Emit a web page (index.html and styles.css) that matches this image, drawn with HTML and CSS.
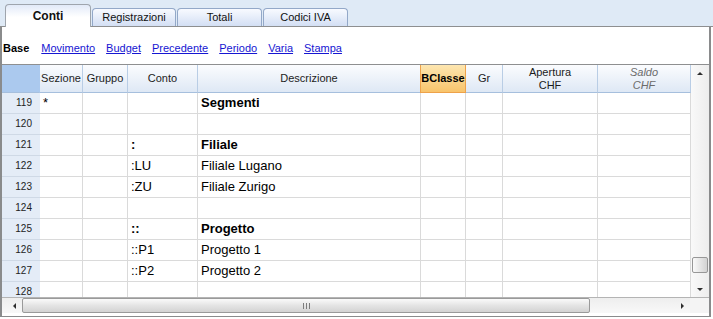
FILE: index.html
```html
<!DOCTYPE html>
<html lang="it">
<head>
<meta charset="utf-8">
<title>Conti</title>
<link rel="stylesheet" href="styles.css">
</head>
<body>
<div class="window">
  <div class="tabbar">
    <div class="tab active">Conti</div>
    <div class="tab">Registrazioni</div>
    <div class="tab">Totali</div>
    <div class="tab">Codici IVA</div>
  </div>
  <div class="panel">
    <nav class="views">
      <b class="current">Base</b>
      <a href="#">Movimento</a>
      <a href="#">Budget</a>
      <a href="#">Precedente</a>
      <a href="#">Periodo</a>
      <a href="#">Varia</a>
      <a href="#">Stampa</a>
    </nav>
    <div class="grid">
      <div class="grid-main">
        <div class="sheet">
          <div class="h corner"></div>
          <div class="h">Sezione</div>
          <div class="h">Gruppo</div>
          <div class="h">Conto</div>
          <div class="h">Descrizione</div>
          <div class="h bc">BClasse</div>
          <div class="h">Gr</div>
          <div class="h">Apertura<br>CHF</div>
          <div class="h saldo">Saldo<br>CHF</div>

          <div class="n">119</div><div class="c">*</div><div class="c"></div><div class="c"></div><div class="c b">Segmenti</div><div class="c"></div><div class="c"></div><div class="c"></div><div class="c"></div>
          <div class="n">120</div><div class="c"></div><div class="c"></div><div class="c"></div><div class="c"></div><div class="c"></div><div class="c"></div><div class="c"></div><div class="c"></div>
          <div class="n">121</div><div class="c"></div><div class="c"></div><div class="c b">:</div><div class="c b">Filiale</div><div class="c"></div><div class="c"></div><div class="c"></div><div class="c"></div>
          <div class="n">122</div><div class="c"></div><div class="c"></div><div class="c">:LU</div><div class="c">Filiale Lugano</div><div class="c"></div><div class="c"></div><div class="c"></div><div class="c"></div>
          <div class="n">123</div><div class="c"></div><div class="c"></div><div class="c">:ZU</div><div class="c">Filiale Zurigo</div><div class="c"></div><div class="c"></div><div class="c"></div><div class="c"></div>
          <div class="n">124</div><div class="c"></div><div class="c"></div><div class="c"></div><div class="c"></div><div class="c"></div><div class="c"></div><div class="c"></div><div class="c"></div>
          <div class="n">125</div><div class="c"></div><div class="c"></div><div class="c b">::</div><div class="c b">Progetto</div><div class="c"></div><div class="c"></div><div class="c"></div><div class="c"></div>
          <div class="n">126</div><div class="c"></div><div class="c"></div><div class="c">::P1</div><div class="c">Progetto 1</div><div class="c"></div><div class="c"></div><div class="c"></div><div class="c"></div>
          <div class="n">127</div><div class="c"></div><div class="c"></div><div class="c">::P2</div><div class="c">Progetto 2</div><div class="c"></div><div class="c"></div><div class="c"></div><div class="c"></div>
          <div class="n">128</div><div class="c"></div><div class="c"></div><div class="c"></div><div class="c"></div><div class="c"></div><div class="c"></div><div class="c"></div><div class="c"></div>
        </div>
        <div class="vscroll">
          <div class="varrow"><span class="tri-up"></span></div>
          <div class="vspace"></div>
          <div class="vthumb"></div>
          <div class="vgap"></div>
          <div class="varrow"><span class="tri-down"></span></div>
        </div>
      </div>
      <div class="hscroll-row">
        <div class="hscroll">
          <div class="harrow left"><span class="tri-left"></span></div>
          <div class="hthumb"><span class="grip"><i></i><i></i><i></i></span></div>
          <div class="hspace"></div>
          <div class="harrow right"><span class="tri-right"></span></div>
        </div>
        <div class="corner-box"></div>
      </div>
    </div>
  </div>
</div>
</body>
</html>
```
FILE: styles.css
```css
* { box-sizing: border-box; }
html, body { margin: 0; padding: 0; }
body {
  width: 713px;
  height: 319px;
  background: #ffffff;
  font-family: "Liberation Sans", Arial, sans-serif;
  color: #000;
  overflow: hidden;
}
.window { width: 713px; }

/* tabs */
.tabbar {
  height: 27px;
  background: #dfeaf6;
  border-bottom: 1px solid #8e8f90;
  display: flex;
  align-items: flex-end;
  gap: 1px;
  padding-left: 5px;
}
.tab {
  height: 18px;
  width: 85px;
  border: 1px solid #93a8c8;
  border-bottom: none;
  border-radius: 4px 4px 0 0;
  background: linear-gradient(#f8faff, #d3dff4);
  font-size: 11px;
  line-height: 17px;
  text-align: center;
  color: #111;
}
.tab:nth-child(2) { width: 84px; }
.tab.active {
  width: 86px;
  height: 23px;
  margin-bottom: -1px;
  border-color: #9fa5ad;
  background: linear-gradient(#e2eaf8, #ffffff 55%);
  font-size: 12px;
  font-weight: bold;
  line-height: 18px;
  padding-top: 2px;
}

/* panel */
.panel {
  width: 711px;
  border-left: 2px solid #8a8b8c;
  border-right: 2px solid #8a8b8c;
  border-bottom: 1px solid #8a8b8c;
  background: #fff;
}
.views {
  height: 37px;
  padding: 4px 0 0 1px;
  display: flex;
  align-items: center;
  gap: 11px;
  font-size: 11px;
}
.views .current { font-weight: bold; color: #000; margin-right: 1px; }
.views a { color: #1616d2; text-decoration: underline; }

.grid {
  border-top: 1px solid #8e8f90;
  padding-bottom: 3px;
}
.grid-main {
  display: flex;
  height: 232px;
}
.sheet {
  width: 689px;
  height: 232px;
  overflow: hidden;
  display: grid;
  grid-template-columns: 38px 43px 45px 70px 223px 45px 37px 95px 93px;
  grid-template-rows: 28px;
  grid-auto-rows: 21px;
}
.h {
  background: linear-gradient(#fbfcfe, #dee8f5);
  border-right: 1px solid #b9cde5;
  border-bottom: 1px solid #a6bfdd;
  font-size: 11px;
  line-height: 13px;
  color: #1c1c1c;
  display: flex;
  align-items: center;
  justify-content: center;
  text-align: center;
  white-space: nowrap;
  overflow: hidden;
}
.h.corner {
  background: #abc9ee;
  border-right-color: #abc9ee;
}
.h.bc {
  background: linear-gradient(#fde6b0, #f8c46c);
  border-right-color: #eea24a;
  border-bottom-color: #eea24a;
  box-shadow: -1px 0 0 #eea24a;
  font-weight: bold;
  color: #000;
}
.h.saldo { font-style: italic; color: #6b6b6b; }

.n {
  background: #e4ecf7;
  border-bottom: 1px solid #cfd9e6;
  font-size: 10px;
  line-height: 20px;
  text-align: right;
  padding-right: 8px;
  color: #222;
}
.c {
  border-right: 1px solid #dadada;
  border-bottom: 1px solid #dadada;
  font-size: 13px;
  line-height: 20px;
  padding-left: 3px;
  white-space: nowrap;
  overflow: hidden;
  color: #000;
}
.c.b { font-weight: bold; }

/* vertical scrollbar */
.vscroll {
  width: 18px;
  height: 232px;
  display: flex;
  flex-direction: column;
  align-items: center;
  background: linear-gradient(to right, #f9f9f9, #ededed);
}
.varrow {
  width: 18px;
  height: 16px;
  display: flex;
  align-items: center;
  justify-content: center;
  flex: none;
}
.vspace { flex: 1; }
.vgap { height: 8px; flex: none; }
.vthumb {
  width: 16px;
  height: 16px;
  flex: none;
  margin-left: -1px;
  border: 1px solid #979797;
  border-radius: 2px;
  background: linear-gradient(to right, #fafafa, #e6e6e6 50%, #d2d2d2);
}
.tri-up {
  width: 0; height: 0;
  border-left: 3px solid transparent;
  border-right: 3px solid transparent;
  border-bottom: 3px solid #2e2e2e;
}
.tri-down {
  width: 0; height: 0;
  border-left: 3px solid transparent;
  border-right: 3px solid transparent;
  border-top: 3px solid #2e2e2e;
}

/* horizontal scrollbar */
.hscroll-row {
  display: flex;
  height: 16px;
  border-top: 1px solid #b4b4b4;
}
.hscroll {
  width: 688px;
  display: flex;
  background: linear-gradient(#eeeeee, #f8f8f8);
}
.harrow {
  display: flex;
  align-items: center;
  justify-content: center;
  flex: none;
}
.harrow.left { width: 20px; padding-left: 4px; }
.harrow.right { width: 16px; }
.tri-left {
  width: 0; height: 0;
  border-top: 3px solid transparent;
  border-bottom: 3px solid transparent;
  border-right: 3px solid #2e2e2e;
}
.tri-right {
  width: 0; height: 0;
  border-top: 3px solid transparent;
  border-bottom: 3px solid transparent;
  border-left: 3px solid #2e2e2e;
}
.hthumb {
  width: 568px;
  height: 15px;
  flex: none;
  border: 1px solid #9a9a9a;
  border-radius: 2px;
  background: linear-gradient(#fafafa, #e4e4e4 50%, #d3d3d3);
  display: flex;
  align-items: center;
  justify-content: center;
}
.grip { display: flex; gap: 2px; }
.grip i {
  display: block;
  width: 1px;
  height: 6px;
  background: #7d7d7d;
}
.hspace { flex: 1; }
.corner-box {
  flex: 1;
  background: #f4f4f4;
}
```
